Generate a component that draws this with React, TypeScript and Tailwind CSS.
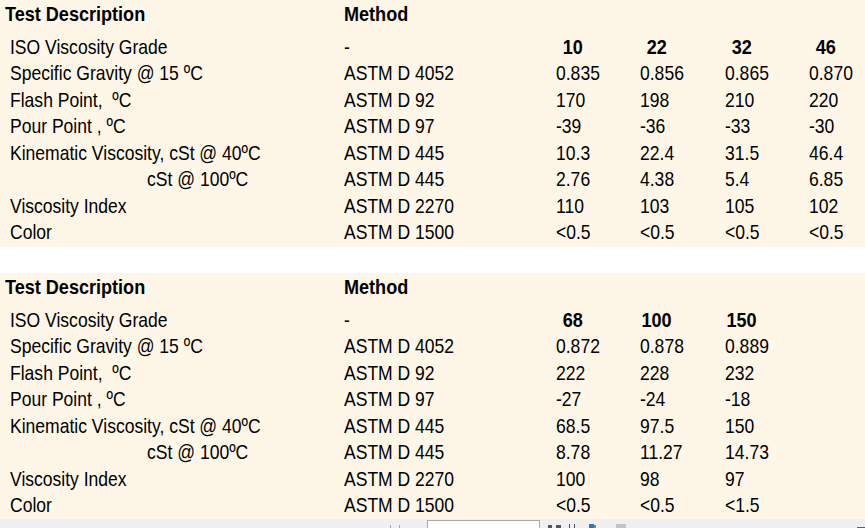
import React from "react";

const LABELS = [
  "ISO Viscosity Grade",
  "Specific Gravity @ 15 ºC",
  "Flash Point,  ºC",
  "Pour Point , ºC",
  "Kinematic Viscosity, cSt @ 40ºC",
  "cSt @ 100ºC",
  "Viscosity Index",
  "Color",
];

const METHODS = [
  "-",
  "ASTM D 4052",
  "ASTM D 92",
  "ASTM D 97",
  "ASTM D 445",
  "ASTM D 445",
  "ASTM D 2270",
  "ASTM D 1500",
];

type Grade = { grade: string; values: string[] };

const TOP: Grade[] = [
  { grade: "10", values: ["0.835", "170", "-39", "10.3", "2.76", "110", "<0.5"] },
  { grade: "22", values: ["0.856", "198", "-36", "22.4", "4.38", "103", "<0.5"] },
  { grade: "32", values: ["0.865", "210", "-33", "31.5", "5.4", "105", "<0.5"] },
  { grade: "46", values: ["0.870", "220", "-30", "46.4", "6.85", "102", "<0.5"] },
];

const BOTTOM: Grade[] = [
  { grade: "68", values: ["0.872", "222", "-27", "68.5", "8.78", "100", "<0.5"] },
  { grade: "100", values: ["0.878", "228", "-24", "97.5", "11.27", "98", "<0.5"] },
  { grade: "150", values: ["0.889", "232", "-18", "150", "14.73", "97", "<1.5"] },
];

const COL_W = ["w-[84px]", "w-[85px]", "w-[84px]", "w-[84px]"];

// no narrow face installed, so squeeze regular Liberation Sans to Arial Narrow width
function N({ children, center, bold }: { children: React.ReactNode; center?: boolean; bold?: boolean }) {
  return (
    <span
      className={`inline-block whitespace-pre ${bold ? "scale-x-[0.86]" : "scale-x-[0.835]"} ${
        center ? "origin-center" : "origin-left"
      }`}
    >
      {children}
    </span>
  );
}

function SpecTable({ grades, last }: { grades: Grade[]; last?: boolean }) {
  return (
    <div className={`bg-[#fef7e7] pt-[1.5px] ${last ? "h-[246px]" : "h-[247px]"}`}>
      {/* header */}
      <div className="flex h-[24px] leading-[24px] font-bold">
        <div className="w-[339px] ml-[5px] shrink-0">
          <N bold>Test Description</N>
        </div>
        <div className="shrink-0">
          <N bold>Method</N>
        </div>
      </div>

      <div className="mt-[8px]">
        {LABELS.map((label, i) => (
          <div key={i} className="flex h-[26.5px] leading-[26.5px]">
            <div className={`w-[334px] ml-[10px] shrink-0 ${i === 5 ? "pl-[137px]" : ""}`}>
              <N>{label}</N>
            </div>
            <div className="w-[212px] shrink-0">
              <N>{METHODS[i]}</N>
            </div>
            {grades.map((g, c) => (
              <div key={g.grade} className={`${COL_W[c]} shrink-0`}>
                {i === 0 ? (
                  <div className="w-[34px] flex justify-center font-bold">
                    <N center bold>
                      {g.grade}
                    </N>
                  </div>
                ) : (
                  <N>{g.values[i - 1]}</N>
                )}
              </div>
            ))}
          </div>
        ))}
      </div>
    </div>
  );
}

export default function App() {
  return (
    <div className="w-[865px] h-[528px] overflow-hidden bg-white text-black text-[21px] font-['Liberation_Sans',Arial,sans-serif]">
      <SpecTable grades={TOP} />
      <div className="h-[26px] bg-white" />
      <SpecTable grades={BOTTOM} last />

      {/* viewer toolbar peeking in at the bottom */}
      <div className="relative h-[9px] bg-[#f0f0f0] flex items-start">
        <span className="ml-[390px] mt-[6px] w-[1px] h-[3px] bg-[#a8a8a8]" />
        <span className="ml-[8px] mt-[6px] w-[1px] h-[3px] bg-[#a8a8a8]" />
        <div className="ml-[27px] mt-[1px] w-[113px] h-[12px] bg-white border border-[#a9a9a9]" />
        <span className="ml-[8px] mt-[6px] w-[4px] h-[3px] bg-[#555]" />
        <span className="ml-[4px] mt-[6px] w-[5px] h-[3px] bg-[#555]" />
        <span className="ml-[8px] mt-[5px] w-[1px] h-[4px] bg-[#555]" />
        <span className="ml-[4px] mt-[5px] w-[1px] h-[4px] bg-[#555]" />
        <span className="ml-[14px] mt-[5px] w-[5px] h-[4px] bg-[#3b6fc6]" />
        <span className="mt-[6px] w-[2px] h-[3px] bg-[#5aa55a]" />
        <span className="ml-[20px] mt-[5px] w-[10px] h-[4px] bg-[#c4c4c4]" />
        <span className="absolute right-0 top-[8px] w-[8px] h-[1px] bg-[#606060]" />
      </div>
    </div>
  );
}
